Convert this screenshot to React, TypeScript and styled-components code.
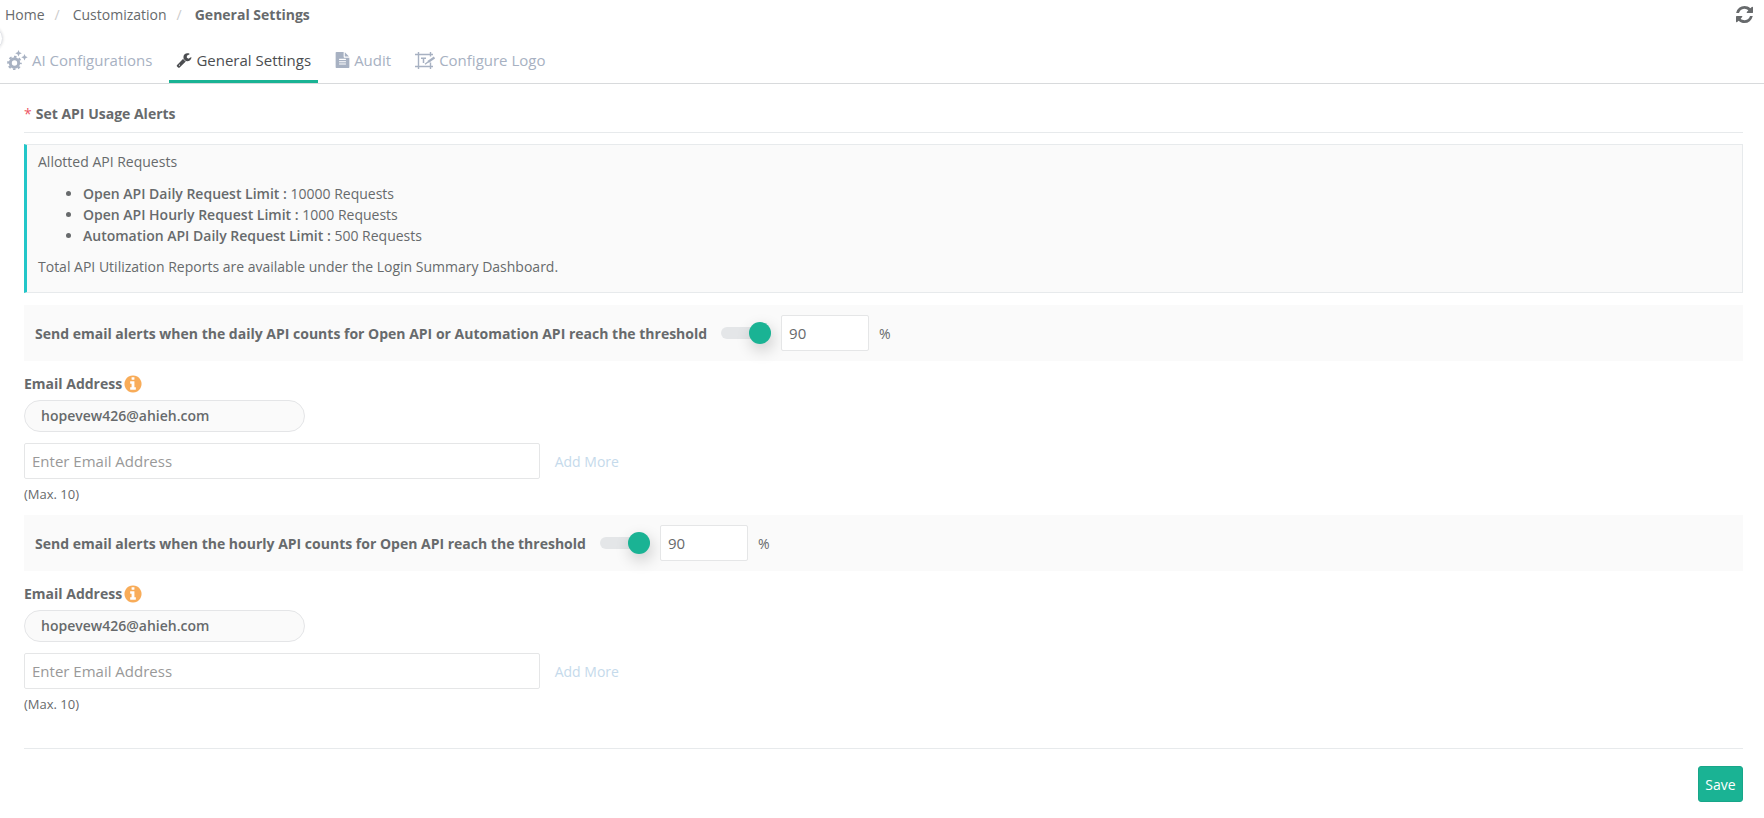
import React, { useState } from "react";
import styled, { createGlobalStyle } from "styled-components";

const GlobalStyle = createGlobalStyle`
  *, *::before, *::after { box-sizing: border-box; }
  body {
    margin: 0;
    background: #fff;
    color: #676a6c;
    font-family: "Open Sans", "Noto Sans", sans-serif;
    font-size: 14px;
    line-height: 21px;
  }
  button, input { font-family: inherit; }
`;

const Page = styled.div`
  position: relative;
  overflow: hidden;
`;

const DrawerHandle = styled.span`
  position: absolute;
  left: -22px;
  top: 26px;
  width: 25px;
  height: 25px;
  border: 1px solid #dfe1e6;
  border-radius: 50%;
  box-shadow: 0 0 3px rgba(0, 0, 0, 0.15);
`;

const TopBar = styled.header`
  display: flex;
  align-items: center;
  justify-content: space-between;
  height: 29px;
  padding: 0 11px 0 5px;
`;

const Crumbs = styled.nav`
  display: flex;
  align-items: center;
`;

const Crumb = styled.a`
  color: #676a6c;
  text-decoration: none;
`;

const CurrentCrumb = styled.span`
  font-weight: 700;
`;

const Slash = styled.span`
  margin: 0 13px 0 10px;
  color: #ccc;
`;

const IconButton = styled.button`
  display: flex;
  padding: 0;
  border: 0;
  background: none;
  color: #676a6c;
`;

const Tabs = styled.nav`
  display: flex;
  height: 55px;
  border-bottom: 1px solid #d8dadc;
`;

const Tab = styled.a<{ $active?: boolean }>`
  display: flex;
  align-items: center;
  gap: 4px;
  padding: 11px 7px 0;
  margin-right: 10px;
  border-bottom: 3px solid ${(p) => (p.$active ? "#1ab394" : "transparent")};
  color: ${(p) => (p.$active ? "#4b4d50" : "#a7b1c2")};
  font-size: 15px;
  text-decoration: none;
`;

const Content = styled.form`
  padding: 20px 21px 16px 24px;
`;

const Title = styled.h1`
  margin: 0;
  padding-bottom: 8px;
  border-bottom: 1px solid #e7eaec;
  font-size: 14px;
  line-height: 20px;
  font-weight: 700;
`;

const Required = styled.span`
  margin-right: 4px;
  color: #ed5565;
  font-weight: 400;
`;

const Notice = styled.section`
  margin: 11px 0 12px;
  padding: 6px 11px 15px;
  border: 1px solid #e7eaec;
  border-left: 3px solid #23c6c8;
  background: #fafafa;
`;

const NoticeText = styled.p`
  margin: 0;
`;

const Limits = styled.ul`
  margin: 11px 0 10px;
  padding-left: 45px;
`;

const Strong = styled.b`
  font-weight: 600;
`;

const Strip = styled.div`
  display: flex;
  align-items: center;
  height: 56px;
  padding: 0 11px;
  background: #fafafa;
`;

const StripLabel = styled.label`
  margin-right: 14px;
  font-weight: 700;
`;

const Toggle = styled.input`
  appearance: none;
  display: flex;
  align-items: center;
  width: 50px;
  height: 12px;
  margin: 0 10px 0 0;
  border-radius: 6px;
  background: #e4e6e8;

  &::before {
    content: "";
    flex: none;
    width: 22px;
    height: 22px;
    border-radius: 50%;
    background: #999;
    box-shadow: 2px 6px 16px rgba(0, 0, 0, 0.2);
  }
  &:checked::before {
    margin-left: auto;
    background: #1ab394;
  }
`;

const TextBox = styled.input`
  height: 36px;
  padding: 0 7px;
  border: 1px solid #e5e6e7;
  border-radius: 2px;
  background: #fff;
  color: #676a6c;
  font-size: 15px;
  outline: none;

  &::placeholder {
    color: #999;
    opacity: 1;
  }
`;

const ThresholdBox = styled(TextBox)`
  width: 88px;
  margin-right: 10px;
`;

const EmailBox = styled(TextBox)`
  width: 30%;
  margin-right: 15px;
`;

const EmailBlock = styled.div`
  padding: 12px 0 11px;
`;

const EmailLabel = styled.label`
  display: flex;
  align-items: center;
  gap: 1px;
  margin-bottom: 5px;
  line-height: 22px;
  font-weight: 700;
`;

const Pill = styled.div`
  width: 281px;
  height: 32px;
  padding: 0 16px;
  border: 1px solid #e4e5e7;
  border-radius: 16px;
  background: #fafafa;
  line-height: 30px;
  font-weight: 600;
`;

const EmailRow = styled.div`
  display: flex;
  align-items: center;
  margin: 11px 0 5px;
`;

const AddMore = styled.button`
  padding: 0;
  border: 0;
  background: none;
  color: #c5daeb;
  font-size: 14px;
`;

const Hint = styled.small`
  display: block;
  font-size: 13px;
  line-height: 20px;
`;

const Footer = styled.footer`
  display: flex;
  justify-content: flex-end;
  margin-top: 23px;
  padding-top: 17px;
  border-top: 1px solid #e7eaec;
`;

const SaveButton = styled.button`
  min-width: 45px;
  height: 36px;
  padding: 0 6px;
  border: 1px solid #18a689;
  border-radius: 3px;
  background: #1ab394;
  color: #fff;
  font-size: 14px;
`;

const Refresh = () => (
  <svg width="17" height="17" viewBox="0 0 1536 1536" fill="currentColor" aria-hidden="true">
    <path d="M1511 928q0 5-1 7-64 268-268 434.500t-478 166.500q-146 0-282.500-55t-243.500-157l-129 129q-19 19-45 19t-45-19-19-45v-448q0-26 19-45t45-19h448q26 0 45 19t19 45-19 45l-137 137q71 66 161 102t187 36q134 0 250-65t186-179q11-17 53-117 8-23 30-23h192q13 0 22.500 9.500t9.500 22.500zm25-800v448q0 26-19 45t-45 19h-448q-26 0-45-19t-19-45 19-45l138-138q-148-137-349-137-134 0-250 65t-186 179q-11 17-53 117-8 23-30 23h-199q-13 0-22.500-9.500t-9.500-22.500v-7q65-268 270-434.500t480-166.500q146 0 284 55.500t245 156.500l130-129q19-19 45-19t45 19 19 45z" />
  </svg>
);

const Info = () => (
  <svg width="20" height="20" viewBox="0 0 1792 1792" fill="#f8ac59" aria-hidden="true">
    <path d="M1152 1376v-160q0-14-9-23t-23-9h-96v-512q0-14-9-23t-23-9h-320q-14 0-23 9t-9 23v160q0 14 9 23t23 9h96v320h-96q-14 0-23 9t-9 23v160q0 14 9 23t23 9h448q14 0 23-9t9-23zm-128-896v-160q0-14-9-23t-23-9h-192q-14 0-23 9t-9 23v160q0 14 9 23t23 9h192q14 0 23-9t9-23zm640 416q0 209-103 385.500t-279.500 279.500-385.500 103-385.500-103-279.500-279.500-103-385.500 103-385.500 279.500-279.500 385.500-103 385.500 103 279.500 279.500 103 385.500z" />
  </svg>
);

const Wrench = () => (
  <svg width="16" height="16" viewBox="0 0 1792 1792" fill="currentColor" aria-hidden="true">
    <path d="M448 1472q0-26-19-45t-45-19-45 19-19 45 19 45 45 19 45-19 19-45zm644-420l-682 682q-37 37-90 37-52 0-91-37l-106-108q-38-36-38-90 0-53 38-91l681-681q39 98 114.500 173.500t173.500 114.500zm634-435q0 39-23 106-47 134-164.500 217.500t-258.500 83.500q-185 0-316.500-131.500t-131.500-316.500 131.500-316.500 316.500-131.500q58 0 121.500 16.500t107.500 46.500q16 11 16 28t-16 28l-293 169v224l193 107q5-3 79-48.500t135.500-81 70.500-35.500q15 0 23.500 10t8.500 25z" />
  </svg>
);

const FileText = () => (
  <svg width="15" height="16" viewBox="128 0 1536 1792" fill="currentColor" aria-hidden="true">
    <path d="M1596 476q14 14 28 36h-472v-472q22 14 36 28zm-476 164h544v1056q0 40-28 68t-68 28h-1344q-40 0-68-28t-28-68v-1600q0-40 28-68t68-28h800v544q0 40 28 68t68 28zm160 736v-64q0-14-9-23t-23-9h-704q-14 0-23 9t-9 23v64q0 14 9 23t23 9h704q14 0 23-9t9-23zm0-256v-64q0-14-9-23t-23-9h-704q-14 0-23 9t-9 23v64q0 14 9 23t23 9h704q14 0 23-9t9-23zm0-256v-64q0-14-9-23t-23-9h-704q-14 0-23 9t-9 23v64q0 14 9 23t23 9h704q14 0 23-9t9-23z" />
  </svg>
);

const GearSparkle = () => (
  <svg width="21" height="20" viewBox="0 0 21 20" fill="none" stroke="currentColor" aria-hidden="true">
    <circle cx="7.500" cy="13" r="4.200" strokeWidth="3" />
    <circle cx="7.500" cy="13" r="6.300" strokeWidth="2" strokeDasharray="2.474 2.474" strokeDashoffset="1.237" />
    <path fill="currentColor" stroke="none" d="M11.500 0l1 2.300 2.300 1-2.300 1-1 2.300-1-2.300-2.300-1 2.300-1zM17.500 4l1 2.200 2.200 1-2.200 1-1 2.200-1-2.200-2.200-1 2.200-1z" />
  </svg>
);

const LogoFrame = () => (
  <svg width="20" height="19" viewBox="0 0 20 19" fill="none" stroke="currentColor" strokeWidth="1.400" aria-hidden="true">
    <path d="M0 3.500h18M3.500 1v17M0 15.500h18M15.500 1v4.500M15.500 11.500v6.500" />
    <path d="M6 7.200h5M8.500 7v5" strokeWidth="1.500" />
    <path d="M19.500 6.500l-6.500 4.500" strokeWidth="2.200" />
    <path d="M13 11l-3 2.300" />
  </svg>
);

const limits = [
  ["Open API Daily Request Limit :", "10000 Requests"],
  ["Open API Hourly Request Limit :", "1000 Requests"],
  ["Automation API Daily Request Limit :", "500 Requests"],
];

function AlertGroup({ id, label }: { id: string; label: string }) {
  const [on, setOn] = useState(true);
  return (
    <>
      <Strip>
        <StripLabel htmlFor={`${id}-toggle`}>{label}</StripLabel>
        <Toggle
          id={`${id}-toggle`}
          type="checkbox"
          role="switch"
          checked={on}
          onChange={(e) => setOn(e.target.checked)}
        />
        <ThresholdBox aria-label="Threshold percentage" defaultValue="90" />
        <span>%</span>
      </Strip>
      <EmailBlock>
        <EmailLabel htmlFor={`${id}-email`}>
          Email Address <Info />
        </EmailLabel>
        <Pill>hopevew426@ahieh.com</Pill>
        <EmailRow>
          <EmailBox id={`${id}-email`} type="email" placeholder="Enter Email Address" />
          <AddMore type="button">Add More</AddMore>
        </EmailRow>
        <Hint>(Max. 10)</Hint>
      </EmailBlock>
    </>
  );
}

export default function App() {
  return (
    <Page>
      <GlobalStyle />
      <DrawerHandle />
      <TopBar>
        <Crumbs aria-label="Breadcrumb">
          <Crumb href="#home">Home</Crumb>
          <Slash>/</Slash>
          <Crumb href="#customization">Customization</Crumb>
          <Slash>/</Slash>
          <CurrentCrumb>General Settings</CurrentCrumb>
        </Crumbs>
        <IconButton type="button" aria-label="Refresh">
          <Refresh />
        </IconButton>
      </TopBar>
      <Tabs>
        <Tab href="#ai"><GearSparkle />AI Configurations</Tab>
        <Tab href="#general" $active aria-current="page"><Wrench />General Settings</Tab>
        <Tab href="#audit"><FileText />Audit</Tab>
        <Tab href="#logo"><LogoFrame />Configure Logo</Tab>
      </Tabs>
      <Content onSubmit={(e) => e.preventDefault()}>
        <Title><Required>*</Required>Set API Usage Alerts</Title>
        <Notice>
          <NoticeText>Allotted API Requests</NoticeText>
          <Limits>
            {limits.map(([name, value]) => (
              <li key={name}><Strong>{name}</Strong> {value}</li>
            ))}
          </Limits>
          <NoticeText>Total API Utilization Reports are available under the Login Summary Dashboard.</NoticeText>
        </Notice>
        <AlertGroup id="daily" label="Send email alerts when the daily API counts for Open API or Automation API reach the threshold" />
        <AlertGroup id="hourly" label="Send email alerts when the hourly API counts for Open API reach the threshold" />
        <Footer>
          <SaveButton type="submit">Save</SaveButton>
        </Footer>
      </Content>
    </Page>
  );
}
